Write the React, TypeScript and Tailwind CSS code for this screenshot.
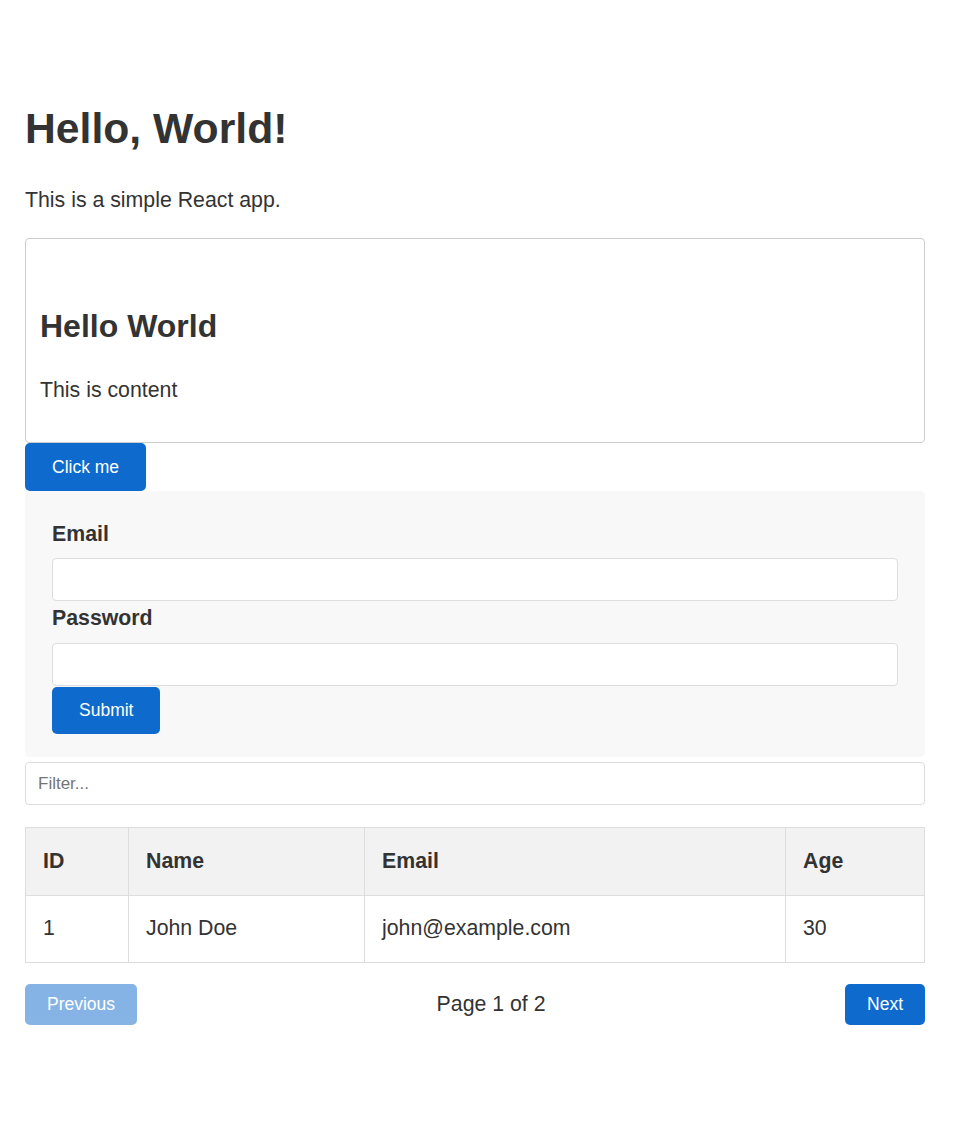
import React from 'react';

// Simple demo page: heading, card, button, login form, filterable table with pager
const rows = [{ id: 1, name: 'John Doe', email: 'john@example.com', age: 30 }];

const App = () => {
  return (
    <div className="min-h-screen bg-white px-[25px] pt-[98px] text-[#333] font-['Liberation_Sans',Arial,sans-serif]">
      <div className="max-w-[900px]">
        <h1 className="text-[42.7px] font-bold leading-[60px]">Hello, World!</h1>
        <p className="mt-[27px] text-[21.3px] leading-[30px]">This is a simple React app.</p>

        {/* Card */}
        <div className="mt-[23px] rounded-[4px] border border-[#ccc] px-[14px] pt-[65px] pb-[37px]">
          <h2 className="text-[32px] font-bold leading-[45px]">Hello World</h2>
          <p className="mt-[26px] text-[21.3px] leading-[30px]">This is content</p>
        </div>

        <button className="flex h-[48px] items-center rounded-[5px] bg-[#0e6acc] px-[27px] text-[17.5px] text-white">
          Click me
        </button>

        {/* Login form */}
        <form className="flex flex-col rounded-[5px] bg-[#f8f8f8] px-[27px] pt-[28px] pb-[23px]">
          <label className="text-[21.3px] font-bold leading-[30px]">Email</label>
          <input
            type="email"
            className="mt-[9px] h-[43px] rounded-[4px] border border-[#ddd] bg-white px-3 outline-none"
          />
          <label className="mt-[2px] text-[21.3px] font-bold leading-[30px]">Password</label>
          <input
            type="password"
            className="mt-[10px] h-[43px] rounded-[4px] border border-[#ddd] bg-white px-3 outline-none"
          />
          <div>
            <button
              type="button"
              className="mt-px flex h-[47px] items-center rounded-[5px] bg-[#0e6acc] px-[27px] text-[17.5px] text-white"
            >
              Submit
            </button>
          </div>
        </form>

        {/* Filter + table */}
        <input
          placeholder="Filter..."
          className="mt-[5px] block h-[43px] w-full rounded-[4px] border border-[#ddd] px-3 text-[17px] outline-none placeholder:text-[#757575]"
        />

        <table className="mt-[22px] w-full border-collapse text-[21.3px]">
          <thead>
            <tr className="h-[68px] bg-[#f2f2f2]">
              <th className="w-[103px] border border-[#ddd] px-[17px] text-left font-bold">ID</th>
              <th className="w-[236px] border border-[#ddd] px-[17px] text-left font-bold">Name</th>
              <th className="w-[421px] border border-[#ddd] px-[17px] text-left font-bold">Email</th>
              <th className="border border-[#ddd] px-[17px] text-left font-bold">Age</th>
            </tr>
          </thead>
          <tbody>
            {rows.map((r) => (
              <tr key={r.id} className="h-[67px]">
                <td className="border border-[#ddd] px-[17px]">{r.id}</td>
                <td className="border border-[#ddd] px-[17px]">{r.name}</td>
                <td className="border border-[#ddd] px-[17px]">{r.email}</td>
                <td className="border border-[#ddd] px-[17px]">{r.age}</td>
              </tr>
            ))}
          </tbody>
        </table>

        {/* Pagination */}
        <div className="mt-[21px] flex items-center justify-between">
          <button
            disabled
            className="flex h-[41px] items-center rounded-[5px] bg-[#0e6acc] px-[22px] text-[17.5px] text-white opacity-50"
          >
            Previous
          </button>
          <span className="text-[21.3px]">Page 1 of 2</span>
          <button className="flex h-[41px] items-center rounded-[5px] bg-[#0e6acc] px-[22px] text-[17.5px] text-white">
            Next
          </button>
        </div>
      </div>
    </div>
  );
};

export default App;
